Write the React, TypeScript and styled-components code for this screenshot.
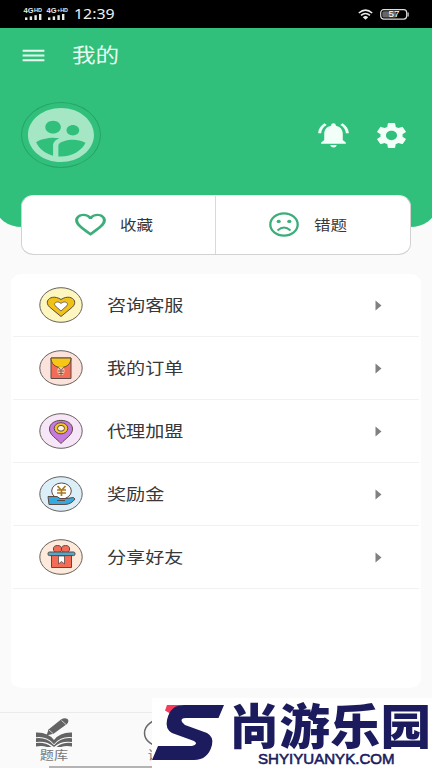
import React from "react";
import styled, { createGlobalStyle } from "styled-components";
import { MdMenu, MdSettings, MdNotificationsActive, MdFavoriteBorder } from "react-icons/md";

const GlobalStyle = createGlobalStyle`
  * { box-sizing: border-box; }
  body { margin: 0; background: #fafafa; font-family: "Noto Sans", "Noto Sans CJK SC", sans-serif; }
`;

const GREEN = "#30c07b";
const NAVY = "#1b1b5e";

const Screen = styled.div`
  position: relative;
  width: 432px;
  height: 768px;
  overflow: hidden;
  display: flex;
  flex-direction: column;
  background: #fafafa;
`;

const StatusBar = styled.header`
  flex: none;
  height: 28px;
  background: #000;
  color: #eee;
  display: flex;
  align-items: center;
  justify-content: space-between;
  padding: 0 23px 0 23px;
`;

const StatusGroup = styled.div<{ $gap?: number }>`
  display: flex;
  align-items: center;
  height: 28px;
  gap: ${(p) => p.$gap ?? 0}px;
`;

const Wide = styled.span<{ $size: number; $scale: number; $color?: string }>`
  display: block;
  white-space: nowrap;
  font-family: "Noto Sans CJK SC", sans-serif;
  font-size: ${(p) => p.$size}px;
  line-height: 1;
  padding-bottom: 2px;
  font-weight: 400;
  color: ${(p) => p.$color ?? "#383838"};
  transform: scaleX(${(p) => p.$scale});
  transform-origin: left center;
`;

const Clock = styled.span`
  font-family: "Noto Sans", sans-serif;
  font-size: 13.5px;
  line-height: 28px;
  margin-left: 5px;
  transform: scaleX(1.18);
  transform-origin: left center;
`;

const Header = styled.section`
  flex: none;
  height: 199px;
  margin: 0 -4px;
  padding: 0 4px;
  background: ${GREEN};
  border-radius: 0 0 26px 26px / 0 0 20px 20px;
`;

const TitleBar = styled.div`
  display: flex;
  align-items: center;
  height: 55px;
  padding-left: 19px;
  gap: 24px;
  color: #e8faf0;
`;

const MenuIcon = styled(MdMenu)`
  width: 29px;
  height: 23px;
`;

const Profile = styled.div`
  display: flex;
  align-items: center;
  height: 104px;
  padding: 0 22px 0 21px;
  color: #f2fff8;
`;

const BellIcon = styled(MdNotificationsActive)`
  width: 37px;
  height: 30px;
  margin-right: 21px;
`;

const GearIcon = styled(MdSettings)`
  width: 37px;
  height: 31px;
`;

const Avatar = styled.div`
  width: 80px;
  height: 66px;
  border: 1px solid #27a468;
  border-radius: 50%;
  display: flex;
  align-items: center;
  justify-content: center;
  margin-right: auto;
`;

const QuickCard = styled.section`
  flex: none;
  position: relative;
  display: flex;
  height: 60px;
  margin: -32px 21px 0;
  background: #fff;
  border: 1px solid #d2d2d2;
  border-top-color: #e6f4ec;
  border-radius: 13px / 11px;
`;

const QuickItem = styled.div<{ $divided?: boolean }>`
  flex: ${(p) => (p.$divided ? "1" : "0 0 193px")};
  display: flex;
  align-items: center;
  padding-left: ${(p) => (p.$divided ? 53 : 49)}px;
  border-left: ${(p) => (p.$divided ? "1px solid #d9d9d9" : "none")};
`;

const QuickIcon = styled.span<{ $width: number; $gap: number }>`
  width: ${(p) => p.$width}px;
  display: flex;
  justify-content: center;
  margin: 0 ${(p) => p.$gap}px 2px 0;
`;

const HeartIcon = styled(MdFavoriteBorder)`
  flex: none;
  width: 37px;
  height: 29px;
  color: #3cae7a;
`;

const MenuCard = styled.section`
  flex: none;
  height: 414px;
  margin: 19px 11px 0;
  background: #fff;
  border-radius: 11px / 9px;
`;

const MenuRow = styled.div`
  display: flex;
  align-items: center;
  height: 63.1px;
  margin: 0 2px;
  padding: 0 37px 0 26px;
  border-bottom: 1px solid #f1f1f1;
`;

const RowLabel = styled.div`
  flex: 1;
  margin-left: 24px;
`;

const TabBar = styled.nav`
  flex: none;
  margin-top: auto;
  height: 56px;
  border-top: 1px solid #ebebeb;
  display: flex;
`;

const Tab = styled.div`
  width: 108px;
  display: flex;
  flex-direction: column;
  align-items: center;
  padding-top: 5px;
  gap: 1px;
  & > span { transform-origin: center; }
`;

const HomeLine = styled.div`
  position: absolute;
  left: 49px;
  bottom: 0;
  width: 104px;
  height: 2px;
  background: #b4b4b4;
`;

const Brand = styled.aside`
  position: absolute;
  right: 0;
  bottom: 0;
  width: 280px;
  height: 70px;
  background: #fff;
  display: flex;
`;

const BrandText = styled.div`
  display: flex;
  flex-direction: column;
  margin-left: 5px;
`;

const BrandName = styled.div`
  font-family: "Noto Sans CJK SC", sans-serif;
  font-weight: 900;
  font-size: 48px;
  line-height: 48px;
  height: 53px;
  padding-top: 1px;
  color: ${NAVY};
  white-space: nowrap;
  transform: scaleX(1.052);
  transform-origin: left;
`;

const BrandUrl = styled.div`
  font-family: "Liberation Sans", sans-serif;
  font-size: 15.4px;
  line-height: 15px;
  color: ${NAVY};
  -webkit-text-stroke: 0.6px ${NAVY};
  margin-left: 29px;
  white-space: nowrap;
  transform: scaleX(0.98);
  transform-origin: left;
`;

const Signal = ({ label }: { label: string }) => (
  <svg width="23" height="13" viewBox="0 0 23 13" fill="#e8e8e8" fontFamily="Liberation Sans" fontWeight="700">
    <text x="0.5" y="5" fontSize="6.5" textLength="10" lengthAdjust="spacingAndGlyphs">4G</text>
    <text x="11" y="4" fontSize="4.8" textLength={label.length > 2 ? 11 : 8} lengthAdjust="spacingAndGlyphs">{label}</text>
    <rect x="2" y="9.4" width="2.4" height="2.6" />
    <rect x="6.700" y="8.4" width="2.4" height="3.6" />
    <rect x="11.4" y="7.2" width="2.4" height="4.8" />
    <rect x="16" y="6" width="2.4" height="6" />
  </svg>
);

const Wifi = () => (
  <svg width="15" height="11" viewBox="0 0 15 11" fill="none" stroke="#eee" strokeWidth="1.5">
    <path d="M.8 4Q7.5-1.8 14.2 4M3 6.4Q7.5 2.7 12 6.4" />
    <path d="M4.8 8.2Q7.5 5.8 10.2 8.2L7.5 10.8Z" fill="#eee" stroke="none" />
  </svg>
);

const Battery = () => (
  <svg width="29" height="11" viewBox="0 0 29 11">
    <rect x=".7" y=".7" width="26" height="9.4" rx="3" fill="none" stroke="#ddd" strokeWidth="1.2" />
    <rect x="2.3" y="2.3" width="14" height="6.2" rx="1.5" fill="#666" />
    <path d="M27.5 3.5h1.2v4h-1.2z" fill="#ddd" />
    <text x="8.5" y="8.4" fontFamily="Liberation Sans" fontSize="8.5" fill="#fff" textLength="11" lengthAdjust="spacingAndGlyphs">57</text>
  </svg>
);

const People = () => (
  <svg width="66" height="54" viewBox="2 2 20 20" preserveAspectRatio="none" fill="#a5e6c5">
    <path d="M11.99 2c-5.52 0-10 4.48-10 10s4.48 10 10 10 10-4.48 10-10-4.48-10-10-10zm3.61 6.34c1.07 0 1.93.86 1.93 1.93 0 1.07-.86 1.93-1.93 1.93-1.07 0-1.93-.86-1.93-1.93-.01-1.07.86-1.93 1.93-1.93zm-6-1.58c1.3 0 2.36 1.06 2.36 2.36 0 1.3-1.06 2.36-2.36 2.36-1.3 0-2.36-1.06-2.36-2.36 0-1.31 1.05-2.36 2.36-2.36zm0 9.13v3.75c-2.4-.75-4.3-2.6-5.14-4.96 1.05-1.12 3.67-1.69 5.14-1.69.53 0 1.2.08 1.9.22-1.64.87-1.9 2.02-1.9 2.68zM11.99 20c-.27 0-.53-.01-.79-.04v-4.07c0-1.42 2.94-2.13 4.4-2.13 1.07 0 2.92.39 3.84 1.15-1.17 2.97-4.06 5.09-7.45 5.09z" />
  </svg>
);

const SadFace = () => (
  <svg width="30" height="25" viewBox="0 0 30 25" fill="none" stroke="#3cae7a" strokeWidth="2.3">
    <ellipse cx="15" cy="12.5" rx="13.7" ry="11.2" />
    <path d="M8.5 18.5Q15 12.6 21.5 18.5" strokeWidth="2" />
    <ellipse cx="9.7" cy="9.4" rx="2.1" ry="1.7" fill="#3cae7a" stroke="none" />
    <ellipse cx="20.3" cy="9.4" rx="2.1" ry="1.7" fill="#3cae7a" stroke="none" />
  </svg>
);

const Arrow = () => (
  <svg width="7" height="11" viewBox="0 0 7 11"><path d="M.5.5L6.5 5.5.5 10.5z" fill="#808080" /></svg>
);

const Disc = ({ fill, children }: { fill: string; children: React.ReactNode }) => (
  <svg width="44" height="36" viewBox="0 0 44 36" stroke="#5b4a45" strokeWidth="1" strokeLinejoin="round">
    <ellipse cx="22" cy="18" rx="21.2" ry="17.3" fill={fill} stroke="#66605c" />
    {children}
  </svg>
);

const rows = [
  {
    label: "咨询客服",
    icon: (
      <Disc fill="#fdf6bf">
        <path d="M22 29.5L10.5 20C4 13.5 13 6.500 22 12.500 31 6.500 40 13.500 33.500 20Z" fill="#f0c216" />
        <path d="M22 24L16 18.600C14 15.500 19 13.500 22 16.500 25 13.500 30 15.500 28 18.600Z" fill="#fff" strokeWidth=".8" />
      </Disc>
    ),
  },
  {
    label: "我的订单",
    icon: (
      <Disc fill="#fbe3dc">
        <path d="M12 8H32V28.500H12Z" fill="#f36c57" />
        <path d="M12 8H32C32 13.500 28 17.500 22 17.500S12 13.500 12 8Z" fill="#f8c713" />
        <ellipse cx="22" cy="21" rx="3.600" ry="4.200" fill="#f7c3a8" stroke="none" />
        <path d="M19.500 17.500l2.500 3 2.500-3M19 21h6M19.500 23.500h5M22 21v4.500" fill="none" strokeWidth=".8" />
      </Disc>
    ),
  },
  {
    label: "代理加盟",
    icon: (
      <Disc fill="#f7e6f7">
        <path d="M22 30.500C17 25 10.500 22 10.500 16 10.500 4.500 33.500 4.500 33.500 16 33.500 22 27 25 22 30.500Z" fill="#c67ae0" />
        <ellipse cx="22" cy="15.300" rx="6.800" ry="5.600" fill="#f7c52a" />
        <ellipse cx="22" cy="15.300" rx="3.500" ry="2.900" fill="#fff6e2" />
      </Disc>
    ),
  },
  {
    label: "奖励金",
    icon: (
      <Disc fill="#dceff8">
        <ellipse cx="22.500" cy="15" rx="9.800" ry="8" fill="#fff" />
        <path d="M18.500 10l4 4.500 4-4.500M18 14h9M18 17h9M22.500 14v6" fill="none" stroke="#a87a20" strokeWidth="1.7" />
        <path d="M9 20.500H18L21 22.500H27L34.500 21.500 36 23C34 26 30 28.500 26 28.500H10Z" fill="#37a9dc" />
        <path d="M18 24.500h8" />
      </Disc>
    ),
  },
  {
    label: "分享好友",
    icon: (
      <Disc fill="#fdeadb">
        <path d="M12.500 16H32.500V28.500H12.500Z" fill="#f36c57" />
        <ellipse cx="18.500" cy="10" rx="4.100" ry="3.500" fill="#f36c57" />
        <ellipse cx="26.500" cy="10" rx="4.100" ry="3.500" fill="#f36c57" />
        <rect x="9" y="13" width="27" height="3.600" rx="1.500" fill="#54a9cb" />
        <path d="M19.500 17H25.500V25L22.500 22.500 19.500 25Z" fill="#fff" strokeWidth=".8" />
      </Disc>
    ),
  },
];

const BookPen = () => (
  <svg width="38" height="30" viewBox="0 0 38 30" fill="#646464">
    <path d="M13.500 11.500L26 1.500Q29.500-.500 32.500 1 34.500 3.300 32 6L18.500 15.800 11.500 17.500Z" />
    <path d="M26.500 2.500L31 6.500M14 12L18 15.500" stroke="#fafafa" strokeWidth=".7" />
    <path d="M1 14.500Q13 14 19 22 25 14 37 14.500V19.300Q26 18 19 26.200 12 18 1 19.300Z" />
    <path d="M1 20.200Q12 19 19 27.300 26 19 37 20.200V24Q26 22.500 19 29 12 22.500 1 24Z" />
    <path d="M1 25Q10 24 16.500 29H12Q7 27.200 1 28.500ZM37 25Q28 24 21.500 29H26Q31 27.200 37 28.500Z" />
  </svg>
);

const CourseIcon = () => (
  <svg width="38" height="30" viewBox="0 0 38 30" fill="none" stroke="#686868" strokeWidth="1.500">
    <ellipse cx="19" cy="15" rx="17.500" ry="13.700" />
    <path d="M15 9L25 15 15 21Z" />
  </svg>
);

const BrandMark = () => (
  <svg width="72" height="70" viewBox="0 0 72 70">
    <path d="M15 7H29L18 15.500 13 12.500Z" fill="#f23d5c" />
    <path d="M72 7L66.500 20H34Q28 20 30 24L33 27 55 35Q62 39 60 47 56 62 42 62H0L6 48H40Q47 46 42 43L20 35Q13 31 15 22 18 7 32 7Z" fill={NAVY} />
  </svg>
);

export default function App() {
  return (
    <>
      <GlobalStyle />
      <Screen>
        <StatusBar>
          <StatusGroup>
            <Signal label="HD" />
            <Signal label="+HD" />
            <Clock>12:39</Clock>
          </StatusGroup>
          <StatusGroup $gap={7}>
            <Wifi />
            <Battery />
          </StatusGroup>
        </StatusBar>
        <Header>
          <TitleBar>
            <MenuIcon preserveAspectRatio="none" />
            <Wide $size={20} $scale={1.18} $color="#e8faf0">我的</Wide>
          </TitleBar>
          <Profile>
            <Avatar><People /></Avatar>
            <BellIcon preserveAspectRatio="none" />
            <GearIcon preserveAspectRatio="none" />
          </Profile>
        </Header>
        <QuickCard>
          <QuickItem>
            <QuickIcon $width={38} $gap={11}><HeartIcon preserveAspectRatio="none" /></QuickIcon>
            <Wide $size={14} $scale={1.18}>收藏</Wide>
          </QuickItem>
          <QuickItem $divided>
            <QuickIcon $width={30} $gap={15}><SadFace /></QuickIcon>
            <Wide $size={14} $scale={1.18}>错题</Wide>
          </QuickItem>
        </QuickCard>
        <MenuCard>
          {rows.map((row) => (
            <MenuRow key={row.label}>
              {row.icon}
              <RowLabel><Wide $size={16.2} $scale={1.18}>{row.label}</Wide></RowLabel>
              <Arrow />
            </MenuRow>
          ))}
        </MenuCard>
        <TabBar>
          <Tab><BookPen /><Wide $size={12} $scale={1.18} $color="#777">题库</Wide></Tab>
          <Tab><CourseIcon /><Wide $size={12} $scale={1.18} $color="#777">课程</Wide></Tab>
        </TabBar>
        <HomeLine />
        <Brand>
          <BrandMark />
          <BrandText>
            <BrandName>尚游乐园</BrandName>
            <BrandUrl>SHYIYUANYK.COM</BrandUrl>
          </BrandText>
        </Brand>
      </Screen>
    </>
  );
}
